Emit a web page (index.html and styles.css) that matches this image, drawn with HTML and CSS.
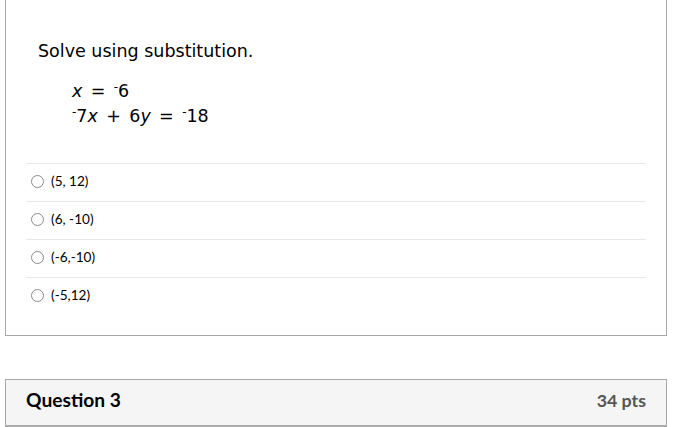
FILE: index.html
```html
<!DOCTYPE html>
<html>
<head>
<meta charset="utf-8">
<link rel="stylesheet" href="styles.css">
</head>
<body>
<div class="page">
  <div class="card">
    <div class="question">
      <p class="prompt">Solve using substitution.</p>
      <div class="equations">
        <div class="eq"><i>x</i> = <sup class="neg">-</sup>6</div>
        <div class="eq"><sup class="neg">-</sup>7<i>x</i> + 6<i>y</i> = <sup class="neg">-</sup>18</div>
      </div>
    </div>
    <div class="answers">
      <label class="answer"><span class="radio"></span><span class="atext">(5, 12)</span></label>
      <label class="answer"><span class="radio"></span><span class="atext">(6, -10)</span></label>
      <label class="answer"><span class="radio"></span><span class="atext">(-6,-10)</span></label>
      <label class="answer"><span class="radio"></span><span class="atext">(-5,12)</span></label>
    </div>
  </div>
  <div class="card2">
    <div class="header">
      <span class="qtitle">Question 3</span>
      <span class="pts">34 pts</span>
    </div>
  </div>
</div>
</body>
</html>
```

FILE: styles.css
```css
html, body {
  margin: 0;
  padding: 0;
  background: #ffffff;
}
.page {
  padding: 0 22px 0 5px;
}
.card {
  width: 660px;
  border: 1px solid #aaaaaa;
  border-top: none;
  padding: 0 0 20px 0;
}
.question {
  padding: 39px 0 0 32px;
  font-family: "DejaVu Sans", Verdana, sans-serif;
  color: #000;
}
.prompt {
  margin: 0;
  font-size: 17.5px;
  line-height: 24px;
}
.equations {
  padding: 16px 0 0 34px;
  font-size: 17.5px;
  word-spacing: 2.8px;
}
.eq {
  line-height: 25px;
}
.eq i {
  font-style: italic;
}
.neg {
  font-size: 12px;
  vertical-align: 6px;
  line-height: 0;
}
.answers {
  margin: 34px 20px 0 20px;
}
.answer {
  display: flex;
  align-items: center;
  height: 34px;
  padding-bottom: 3px;
  border-top: 1px solid #e8e8e8;
  font-family: Lato, "Liberation Sans", sans-serif;
  font-size: 13.6px;
  color: #000;
}
.radio {
  border: 1px solid #8a8a8a;
  border-radius: 50%;
  margin: 0 7px 0 5px;
  box-sizing: border-box;
  width: 13px;
  height: 13px;
}
.card2 {
  width: 660px;
  margin-top: 43px;
  border: 1px solid #aaaaaa;
}
.header {
  display: flex;
  justify-content: space-between;
  align-items: center;
  height: 39px;
  padding: 0 20px 6px 20px;
  background: #f5f5f5;
  border-bottom: 1px solid #aaaaaa;
  font-family: Lato, "Liberation Sans", sans-serif;
  font-weight: bold;
}
.qtitle {
  font-size: 19.2px;
  color: #000;
}
.pts {
  font-size: 17.8px;
  color: #555555;
}
```
